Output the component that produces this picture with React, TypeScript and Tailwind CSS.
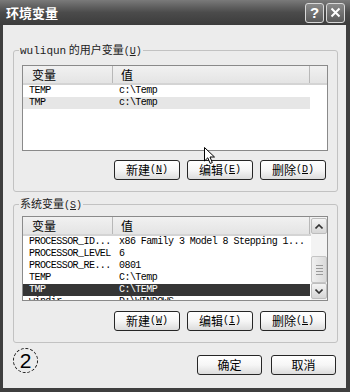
import type { ReactNode } from "react";

const cjk = "font-['SimSun','Noto_Sans_CJK_SC',sans-serif]";
const mono = "font-['Liberation_Mono','Noto_Sans_CJK_SC',monospace]";

type Row = { name: string; value: string; sel?: "soft" | "hard" };

const userVars: Row[] = [
  { name: "TEMP", value: "c:\\Temp" },
  { name: "TMP", value: "c:\\Temp", sel: "soft" },
];

const sysVars: Row[] = [
  { name: "PROCESSOR_ID...", value: "x86 Family 3 Model 8 Stepping 1..." },
  { name: "PROCESSOR_LEVEL", value: "6" },
  { name: "PROCESSOR_RE...", value: "0801" },
  { name: "TEMP", value: "C:\\Temp" },
  { name: "TMP", value: "C:\\TEMP", sel: "hard" },
  { name: "windir", value: "D:\\WINDOWS" },
];

function Key({ k }: { k: string }) {
  return (
    <span className={`${mono} text-[10px]`}>
      (<span className="underline underline-offset-1">{k}</span>)
    </span>
  );
}

function Btn({ label, k, w = "w-[66px]" }: { label: string; k?: string; w?: string }) {
  return (
    <button
      className={`${w} h-[20px] rounded-[3px] border border-[#262626] bg-gradient-to-b from-white via-[#f6f6f6] to-[#dcdcdc] text-[12px] leading-none text-black ${cjk} flex items-center justify-center`}
    >
      {label}
      {k && <Key k={k} />}
    </button>
  );
}

function Header() {
  return (
    <div className={`flex h-[19px] shrink-0 border-b-2 border-[#d4d4d4] bg-gradient-to-b from-[#f1f1f1] to-[#e4e4e4] text-[12px] ${cjk}`}>
      <div className="flex w-[90px] items-center border-r border-[#b8b8b8] pl-[9px]">变量</div>
      <div className="flex w-[197px] items-center border-r border-[#b8b8b8] pl-[8px]">值</div>
      <div className="flex-1" />
    </div>
  );
}

function Rows({ rows }: { rows: Row[] }) {
  return (
    <>
      {rows.map((r) => (
        <div
          key={r.name + r.value}
          className={`flex h-[12px] w-[287px] shrink-0 items-center text-[10px] leading-none tracking-[-0.55px] ${mono} ${
            r.sel === "hard" ? "bg-[#353535] text-white" : r.sel === "soft" ? "bg-[#e6e6e6]" : ""
          }`}
        >
          <span className="w-[90px] pl-[6px]">{r.name}</span>
          <span className="pl-[6px] whitespace-nowrap">{r.value}</span>
        </div>
      ))}
    </>
  );
}

function Group({ title, children, className = "" }: { title: ReactNode; children: ReactNode; className?: string }) {
  return (
    <fieldset className={`rounded-[3px] border border-[#c2c2c2] pr-[9px] pb-[11px] pl-[8px] ${className}`}>
      <legend className={`ml-[-3px] px-[1px] text-[11px] leading-[14px] text-[#222] ${cjk}`}>{title}</legend>
      {children}
    </fieldset>
  );
}

function ScrollBar() {
  return (
    <div className="flex w-[16px] shrink-0 flex-col bg-[#f3f3f3] py-[1px]">
      <div className="flex h-[16px] items-center justify-center rounded-[2px] border border-[#bdbdbd] bg-gradient-to-b from-[#f4f4f4] to-[#d6d6d6]">
        <svg width="8" height="5" viewBox="0 0 8 5">
          <path d="M0.5 4.5 L4 1 L7.5 4.5" fill="none" stroke="#333" strokeWidth="1.6" />
        </svg>
      </div>
      <div className="flex flex-1 flex-col">
        <div className="mt-[22px] flex h-[27px] flex-col items-center justify-center gap-[2px] rounded-[2px] border border-[#c4c4c4] bg-gradient-to-r from-[#f0f0f0] to-[#dadada]">
          <div className="h-px w-[7px] bg-[#999]" />
          <div className="h-px w-[7px] bg-[#999]" />
          <div className="h-px w-[7px] bg-[#999]" />
          <div className="h-px w-[7px] bg-[#999]" />
        </div>
      </div>
      <div className="flex h-[16px] items-center justify-center rounded-[2px] border border-[#bdbdbd] bg-gradient-to-b from-[#f4f4f4] to-[#d6d6d6]">
        <svg width="8" height="5" viewBox="0 0 8 5">
          <path d="M0.5 0.5 L4 4 L7.5 0.5" fill="none" stroke="#333" strokeWidth="1.6" />
        </svg>
      </div>
    </div>
  );
}

export default function App() {
  return (
    <div className="relative flex h-[392px] w-[350px] flex-col overflow-hidden bg-[#3f3f3f]">
      {/* title bar */}
      <div className="flex h-[25px] shrink-0 items-center bg-gradient-to-b from-[#7a7a7a] via-[#4b4b4b] to-[#3c3c3c] pr-[5px] pl-[6px]">
        <span className={`text-[13px] font-bold text-white ${cjk}`}>环境变量</span>
        <div className="ml-auto flex gap-[2px]">
          <div className="flex h-[20px] w-[19px] items-center justify-center rounded-[3px] border border-[#d8d8d8] bg-gradient-to-b from-[#8a8a8a] to-[#5a5a5a] font-['Liberation_Sans',sans-serif] text-[15px] font-bold leading-none text-white">
            ?
          </div>
          <div className="flex h-[20px] w-[19px] items-center justify-center rounded-[3px] border border-[#d8d8d8] bg-gradient-to-b from-[#8a8a8a] to-[#5a5a5a]">
            <svg width="11" height="11" viewBox="0 0 11 11">
              <path d="M1.5 1.5 L9.5 9.5 M9.5 1.5 L1.5 9.5" stroke="white" strokeWidth="2" />
            </svg>
          </div>
        </div>
      </div>

      {/* client area */}
      <div className="mr-[4px] mb-[4px] ml-[3px] flex flex-1 flex-col bg-[#ececec] pt-[17px] pr-[8px] pl-[10px]">
        <Group
          title={
            <>
              <span className={mono}>wuliqun</span> 的用户变量<Key k="U" />
            </>
          }
        >
          <div className="mt-[6px] flex h-[86px] flex-col overflow-hidden border border-[#8a8a8a] bg-white">
            <Header />
            <Rows rows={userVars} />
          </div>
          <div className="mt-[9px] flex justify-end gap-[7px] pr-[2px]">
            <Btn label="新建" k="N" />
            <Btn label="编辑" k="E" />
            <Btn label="删除" k="D" />
          </div>
        </Group>

        <Group
          className="mt-[4px]"
          title={
            <>
              系统变量<Key k="S" />
            </>
          }
        >
          <div className="mt-[3px] flex h-[85px] overflow-hidden border border-[#8a8a8a] bg-white">
            <div className="flex flex-1 flex-col overflow-hidden">
              <Header />
              <Rows rows={sysVars} />
            </div>
            <ScrollBar />
          </div>
          <div className="mt-[10px] flex justify-end gap-[7px] pr-[2px]">
            <Btn label="新建" k="W" />
            <Btn label="编辑" k="I" />
            <Btn label="删除" k="L" />
          </div>
        </Group>

        <div className="mt-[5px] flex items-start pr-[2px]">
          <div className="flex h-[25px] w-[25px] items-center justify-center rounded-full border border-dashed border-[#111] font-['Liberation_Sans',sans-serif] text-[21px] leading-none">
            2
          </div>
          <div className="mt-[7px] ml-auto flex gap-[9px]">
            <Btn label="确定" w="w-[65px]" />
            <Btn label="取消" w="w-[65px]" />
          </div>
        </div>
      </div>

      {/* mouse pointer over the dialog */}
      <svg className="absolute top-[147px] left-[204px]" width="12" height="18" viewBox="0 0 12 18">
        <path d="M0.5 0.5 L0.5 14 L3.8 10.8 L6.2 16.5 L8.3 15.6 L6 10 L10.5 10 Z" fill="white" stroke="black" strokeWidth="1" />
      </svg>
    </div>
  );
}
